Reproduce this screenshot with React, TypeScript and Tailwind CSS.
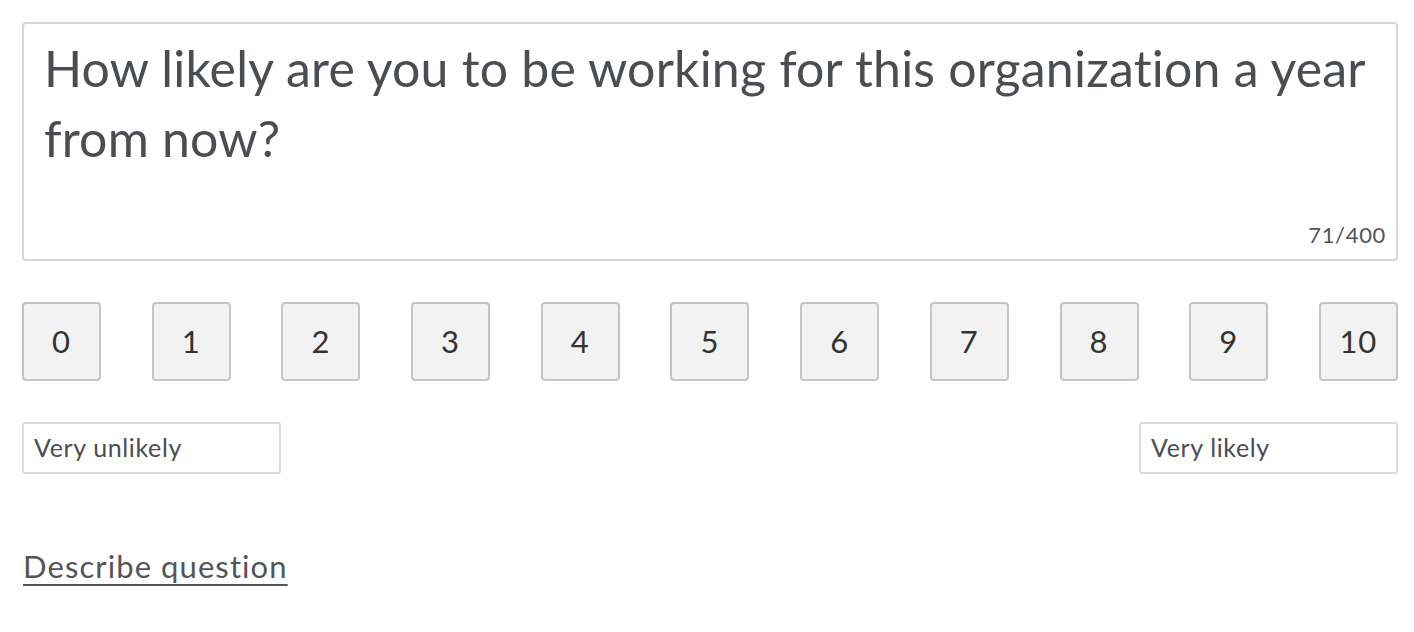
import React from 'react';

const font = { fontFamily: 'Lato, "Open Sans", sans-serif' };

export default function App() {
  const scale = Array.from({ length: 11 }, (_, i) => i);
  return (
    <div className="w-[1414px] h-[632px] bg-white pl-[22px] pr-[16px] pt-[22px]" style={font}>
      <div className="relative h-[239px] rounded-[4px] border-2 border-[#d6d6d6] px-[20px] pt-[9px]">
        <p className="text-[50px] leading-[70px] tracking-[0.004em] text-[#4a4d51]">
          How likely are you to be working for this organization a year from now?
        </p>
        <span className="absolute right-[10px] bottom-[8px] text-[22px] tracking-[0.03em] text-[#555]">71/400</span>
      </div>

      <div className="mt-[41px] flex justify-between">
        {scale.map(n => (
          <div
            key={n}
            className="flex h-[79px] w-[79px] items-center justify-center rounded-[4px] border-2 border-[#c4c4c4] bg-[#f2f2f2] text-[31px] tracking-[0.03em] text-[#333]"
          >
            {n}
          </div>
        ))}
      </div>

      <div className="mt-[41px] flex justify-between">
        <div className="flex h-[52px] w-[259px] items-center rounded-[3px] border-2 border-[#dcdcdc] px-[10px] text-[25px] tracking-[0.025em] text-[#4a4d51]">
          Very unlikely
        </div>
        <div className="flex h-[52px] w-[259px] items-center rounded-[3px] border-2 border-[#dcdcdc] px-[10px] text-[25px] tracking-[0.025em] text-[#4a4d51]">
          Very likely
        </div>
      </div>

      <a href="#" className="mt-[77px] inline-block text-[31px] leading-none tracking-[0.035em] text-[#555] underline decoration-2 underline-offset-[6px] ml-[1px]">
        Describe question
      </a>
    </div>
  );
}
